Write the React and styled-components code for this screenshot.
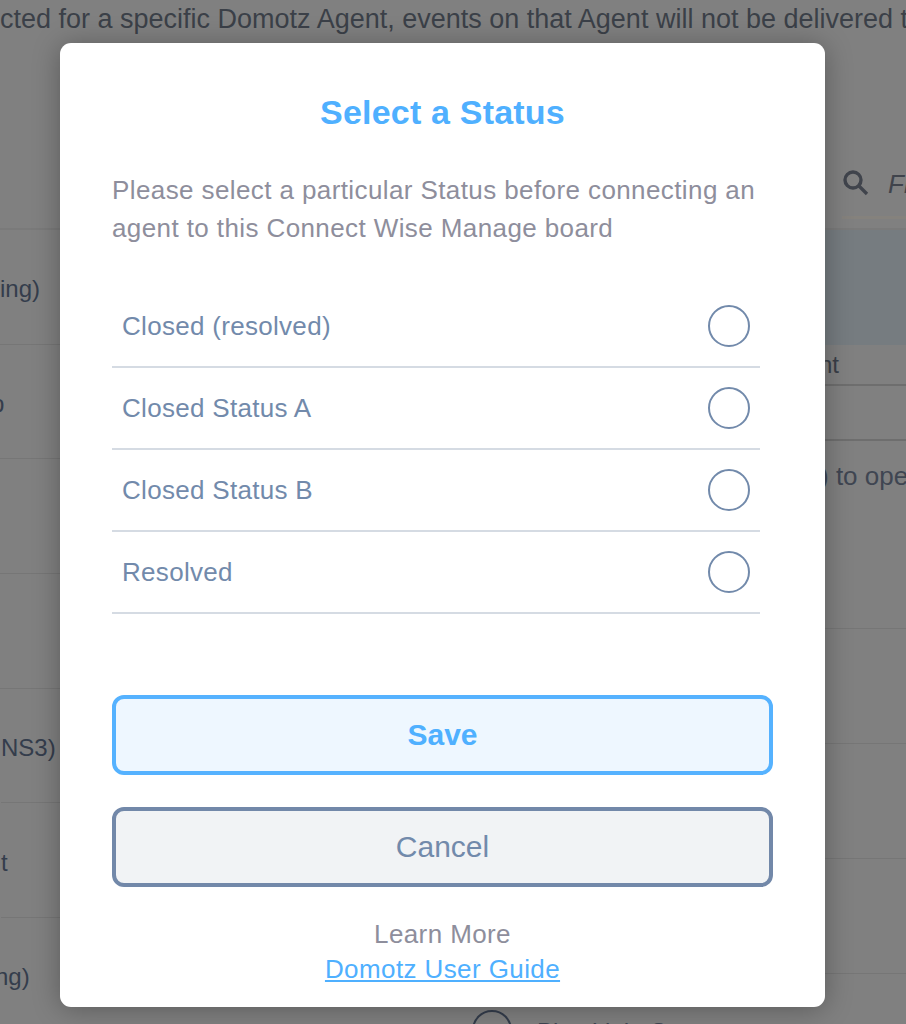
import React from "react";
import styled, { createGlobalStyle } from "styled-components";

const GlobalStyle = createGlobalStyle`
  html, body {
    margin: 0;
    padding: 0;
    height: 100%;
    overflow: hidden;
    background: #808080;
    font-family: "Liberation Sans", Arial, sans-serif;
  }
`;

const Page = styled.div`
  position: relative;
  width: 906px;
  height: 1024px;
  overflow: hidden;
  background: #808080;
`;

const Note = styled.p`
  margin: 0;
  height: 230px;
  box-sizing: border-box;
  border-bottom: 2px solid #7a7a7a;
  font-size: 27px;
  line-height: 38px;
  white-space: nowrap;
  color: #3b4048;
`;

const Columns = styled.div`
  display: grid;
  grid-template-columns: 60px 1fr 81px;
`;

const LeftList = styled.div`
  display: flex;
  flex-direction: column;
`;

const LeftRow = styled.div`
  height: 114.7px;
  box-sizing: border-box;
  border-bottom: 1px solid #767676;
  display: flex;
  align-items: center;
  padding-top: 5px;
  margin-left: ${(p) => p.$shift || 0}px;
  font-size: 24px;
  color: #343d4c;
  white-space: nowrap;
`;

const MiddleList = styled.div`
  padding-top: 1010px;
`;

const RightPanel = styled.div`
  display: flex;
  flex-direction: column;
`;

const Band = styled.div`
  height: 115px;
  background: #767c80;
`;

const HeadCell = styled.div`
  height: 41px;
  box-sizing: border-box;
  border-bottom: 2px solid #6e6e6e;
  display: flex;
  align-items: center;
  text-indent: -6px;
  font-size: 24px;
  color: #3a3f48;
`;

const ValueCell = styled.div`
  height: 55px;
  box-sizing: border-box;
  border-bottom: 2px solid #6e6e6e;
`;

const HintCell = styled.div`
  height: 188px;
  box-sizing: border-box;
  border-bottom: 1px solid #767676;
  padding-top: 20px;
  text-indent: -5px;
  font-size: 26px;
  line-height: 30px;
  color: #3f4652;
  white-space: nowrap;
`;

const PlainCell = styled.div`
  height: 115px;
  box-sizing: border-box;
  border-bottom: 1px solid #767676;
`;

const SearchBox = styled.div`
  position: absolute;
  top: 166px;
  left: 842px;
  width: 64px;
  height: 53px;
  box-sizing: border-box;
  border-bottom: 3px solid #85827d;
  display: flex;
  align-items: flex-start;
  gap: 19px;
  color: #40444c;
  font-size: 26px;
  font-style: italic;
  line-height: 36px;
  white-space: nowrap;
  overflow: hidden;
`;

const SearchIcon = styled.svg`
  flex: none;
  margin-top: 3px;
  width: 27px;
  height: 27px;
`;

const FooterPeek = styled.div`
  position: absolute;
  top: 1010px;
  left: 472px;
  display: flex;
  gap: 25px;
  color: #3f4652;
  font-size: 24px;
  white-space: nowrap;
`;

const PeekCircle = styled.span`
  width: 40px;
  height: 40px;
  box-sizing: border-box;
  border: 2px solid #343d4c;
  border-radius: 50%;
`;

const PeekLabel = styled.span`
  padding-top: 8px;
`;

const Modal = styled.div`
  position: absolute;
  top: 43px;
  left: 60px;
  width: 765px;
  height: 964px;
  box-sizing: border-box;
  padding: 50px 52px 0;
  background: #fff;
  border-radius: 11px;
  box-shadow: 0 2px 28px rgba(0, 0, 0, 0.3);
  display: flex;
  flex-direction: column;
`;

const Title = styled.h2`
  margin: 0;
  font-size: 34px;
  line-height: 38px;
  letter-spacing: 0.2px;
  font-weight: 700;
  text-align: center;
  color: #4fb0ff;
`;

const Intro = styled.p`
  margin: 40px 0 0;
  width: 660px;
  font-size: 26px;
  line-height: 38px;
  letter-spacing: 0.4px;
  color: #8e8e9c;
`;

const Options = styled.ul`
  list-style: none;
  margin: 39px 13px 0 0;
  padding: 0;
`;

const Option = styled.li`
  height: 82px;
  box-sizing: border-box;
  border-bottom: 2px solid #d5dbe3;
  padding: 0 10px;
  display: flex;
  align-items: center;
  justify-content: space-between;
  font-size: 26px;
  letter-spacing: 0.3px;
  color: #728aab;
`;

const Radio = styled.span`
  width: 42px;
  height: 42px;
  box-sizing: border-box;
  border: 2px solid #728aab;
  border-radius: 50%;
`;

const ActionButton = styled.button`
  display: block;
  width: 100%;
  height: 80px;
  box-sizing: border-box;
  border-radius: 12px;
  border: 4px solid ${(p) => (p.$primary ? "#55b2ff" : "#7288a9")};
  background: ${(p) => (p.$primary ? "#eef7ff" : "#f1f3f5")};
  color: ${(p) => (p.$primary ? "#4fb0ff" : "#728aab")};
  font-family: inherit;
  font-size: 30px;
  font-weight: ${(p) => (p.$primary ? 700 : 400)};
  margin-top: ${(p) => (p.$primary ? "81px" : "32px")};
`;

const LearnMore = styled.div`
  margin-top: 30px;
  text-align: center;
  font-size: 26px;
  line-height: 35px;
  letter-spacing: 0.4px;
  color: #8e8e9c;
`;

const GuideLink = styled.a`
  color: #4fb0ff;
  text-decoration: underline;
`;

const statuses = ["Closed (resolved)", "Closed Status A", "Closed Status B", "Resolved"];
const leftRows = [
  { text: "ing)" },
  { text: "p", shift: -9 },
  { text: "" },
  { text: "" },
  { text: "NS3)", shift: 1 },
  { text: "t", shift: 1 },
  { text: "ng)", shift: -5 },
];

export default function App() {
  return (
    <Page>
      <GlobalStyle />
      <Note>cted for a specific Domotz Agent, events on that Agent will not be delivered to</Note>
      <Columns>
        <LeftList>
          {leftRows.map((row, i) => (
            <LeftRow key={i} $shift={row.shift}>{row.text}</LeftRow>
          ))}
        </LeftList>
        <MiddleList />
        <RightPanel>
          <Band />
          <HeadCell>nt</HeadCell>
          <ValueCell />
          <HintCell>) to open</HintCell>
          <PlainCell />
          <PlainCell />
          <PlainCell />
        </RightPanel>
      </Columns>
      <SearchBox>
        <SearchIcon viewBox="0 0 27 27" fill="none" stroke="#40444c" strokeWidth="3.4">
          <circle cx="11" cy="11" r="8" />
          <path d="M17 17l8 8" />
        </SearchIcon>
        Filter
      </SearchBox>
      <FooterPeek>
        <PeekCircle />
        <PeekLabel>Blue Light S</PeekLabel>
      </FooterPeek>
      <Modal>
        <Title>Select a Status</Title>
        <Intro>Please select a particular Status before connecting an agent to this Connect Wise Manage board</Intro>
        <Options>
          {statuses.map((s) => (
            <Option key={s}>
              {s}
              <Radio />
            </Option>
          ))}
        </Options>
        <ActionButton $primary>Save</ActionButton>
        <ActionButton>Cancel</ActionButton>
        <LearnMore>
          Learn More
          <br />
          <GuideLink href="#">Domotz User Guide</GuideLink>
        </LearnMore>
      </Modal>
    </Page>
  );
}
